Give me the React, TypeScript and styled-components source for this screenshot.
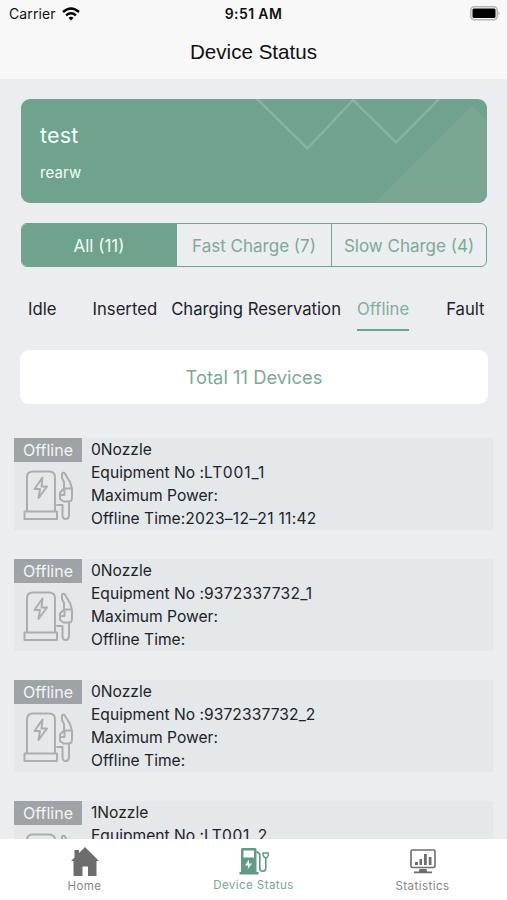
import React from 'react';
import styled, { createGlobalStyle } from 'styled-components';

const GREEN = '#6fa38d';

const GlobalStyle = createGlobalStyle`
  * { box-sizing: border-box; }
  body { margin: 0; background: #ecedf1; font-family: Inter, "Liberation Sans", sans-serif; overflow: hidden; }
`;

const Screen = styled.div`
  width: 507px;
  height: 900px;
  display: flex;
  flex-direction: column;
  overflow: hidden;
  background: #ecedf1;
  color: #202326;
`;

const Header = styled.header`
  height: 79px;
  flex: none;
  background: #f8f8f8;
  color: #111;
`;

const StatusBar = styled.div`
  height: 27px;
  display: grid;
  grid-template-columns: 1fr auto 1fr;
  align-items: center;
  padding: 0 6px 0 9px;
`;

const Carrier = styled.div`
  display: flex;
  align-items: center;
  gap: 6px;
  font-size: 14px;
  letter-spacing: 0.1px;
`;

const Clock = styled.div`
  font-size: 14px;
  font-weight: 600;
  letter-spacing: 0.4px;
  margin-right: 3px;
`;

const BatteryIcon = styled.svg`
  justify-self: end;
  display: block;
`;

const Title = styled.h1`
  margin: 0;
  text-align: center;
  font: 400 20.6px/50px "Liberation Sans", sans-serif;
`;

const Content = styled.main`
  flex: 1;
  min-height: 0;
  overflow: hidden;
  display: flex;
  flex-direction: column;
`;

const StationCard = styled.section`
  flex: none;
  display: grid;
  margin: 20px 20px 0 21px;
  height: 104px;
  border-radius: 9px;
  overflow: hidden;
  background: ${GREEN};
  color: #f2fbf5;
`;

const CardArt = styled.svg`
  grid-area: 1 / 1;
  display: block;
`;

const CardText = styled.div`
  grid-area: 1 / 1;
  padding: 21px 19px;
`;

const StationName = styled.div`
  font-size: 21.5px;
  line-height: 30px;
  letter-spacing: 0.2px;
`;

const StationNote = styled.div`
  margin-top: 12px;
  font-size: 15px;
  line-height: 22px;
  letter-spacing: 0.1px;
`;

const Segments = styled.div`
  flex: none;
  display: grid;
  grid-template-columns: 154px 155px 1fr;
  margin: 20px 20px 0 21px;
  height: 44px;
  border: 1px solid ${GREEN};
  border-radius: 6px;
  overflow: hidden;
`;

const Segment = styled.button<{ $active?: boolean }>`
  border: 0;
  border-left: ${p => (p.$active ? '0' : `1px solid ${GREEN}`)};
  padding: 2px 0 0;
  background: ${p => (p.$active ? GREEN : 'transparent')};
  color: ${p => (p.$active ? '#f2fbf5' : '#7caa97')};
  font: 400 17px/40px Inter, sans-serif;
`;

const Filters = styled.nav`
  flex: none;
  display: flex;
  margin: 28px 22px 0 28px;
  height: 36px;
`;

const Filter = styled.div<{ $active?: boolean; $gap?: number }>`
  height: 36px;
  margin-left: ${p => p.$gap ?? 0}px;
  border-bottom: 2px solid ${p => (p.$active ? GREEN : 'transparent')};
  color: ${p => (p.$active ? '#83ae9c' : '#202326')};
  font-size: 16.7px;
  line-height: 29px;
  white-space: nowrap;
`;

const Total = styled.div`
  flex: none;
  margin: 19px 19px 0 20px;
  height: 54px;
  border-radius: 9px;
  background: #fff;
  color: #7caa97;
  text-align: center;
  font-size: 18.4px;
  line-height: 55px;
`;

const DeviceList = styled.div`
  margin: 34px 14px 0;
  display: flex;
  flex-direction: column;
  gap: 29px;
`;

const DeviceRow = styled.article`
  flex: none;
  display: flex;
  height: 92px;
  gap: 9px;
  background: #e5e8eb;
`;

const DeviceSide = styled.div`
  width: 68px;
  display: flex;
  flex-direction: column;
`;

const Badge = styled.div`
  height: 24px;
  background: #9da3a6;
  color: #f3f5f6;
  text-align: center;
  font-size: 16px;
  line-height: 24px;
`;

const DeviceInfo = styled.div`
  font-size: 15.6px;
  line-height: 23px;
  white-space: nowrap;
`;

const Value = styled.span<{ $tracking?: number }>`
  letter-spacing: ${p => p.$tracking ?? 0}px;
`;

const TabBar = styled.footer`
  flex: none;
  height: 61px;
  display: grid;
  grid-template-columns: repeat(3, 1fr);
  background: #fff;
`;

const Tab = styled.div<{ $active?: boolean }>`
  display: flex;
  flex-direction: column;
  align-items: center;
  padding-top: 7px;
  color: ${p => (p.$active ? '#5f9c83' : '#6d6d6d')};
`;

const TabLabel = styled.span<{ $active?: boolean }>`
  margin-top: ${p => (p.$active ? 0 : 1)}px;
  color: ${p => (p.$active ? '#77a995' : '#858585')};
  font-size: 11.5px;
  line-height: 16px;
  letter-spacing: 0.45px;
`;

const ChargerIcon = () => (
  <svg width="67" height="68" viewBox="0 0 67 68" fill="none" stroke="#aaaeb0" strokeWidth="2" strokeLinejoin="round" strokeLinecap="round">
    <path d="M13 49V15Q13 9.500 19 9.500H35Q41 9.500 41 15V49M10.500 49.500H43V57H10.500ZM28.500 15.500 20.500 27H26L24.500 36 33 24.500H27.500Z" />
    <path d="M43 43H48.500V53Q48.500 57 51.500 57Q55 57 55 53V40M50 26V20L48 16V12Q48.500 10 50.500 11L56 20 58 27V35Q58 39.500 55 39.500H49.500L46 37V30.500L50 26.500H57M46.500 33H50.500V27" />
  </svg>
);

const HomeIcon = () => (
  <svg width="30" height="31" viewBox="0 0 30 31" fill="currentColor">
    <path d="M15 1 29 15H26.500V30H18V20.500H12.500V30H3.500V15H1L4.500 11.500V4H9V7Z" />
  </svg>
);

const PumpIcon = () => (
  <svg width="32" height="31" viewBox="0 0 32 31" fill="none">
    <path fill="currentColor" fillRule="evenodd" d="M3 3.500Q3 2 4.500 2H17Q18.500 2 18.500 3.500V26H20.500V28.500H1.500V26H3ZM5.500 4.500V11.500H16V4.500ZM11 13.500 7 19.500H10.500L9.500 23.500 14 17.500H11Z" />
    <path stroke="currentColor" strokeWidth="1.600" d="M18.500 5.500 21.800 8V22Q21.800 25.200 24.800 25.200Q27.800 25.200 27.800 22V11.500" />
    <path stroke="currentColor" strokeWidth="1.400" d="M24.200 7H31M25.200 7V9.500L26.500 11.500H29L30.200 9.500V7" />
  </svg>
);

const StatisticsIcon = () => (
  <svg width="28" height="31" viewBox="0 0 28 31" fill="none">
    <rect x="2" y="4" width="24" height="17.500" rx="1.500" stroke="currentColor" strokeWidth="1.600" />
    <path fill="currentColor" d="M6 16H9V19H6ZM10.500 13H13V19H10.500ZM15 8H17.800V19H15ZM19.800 11H22.500V19H19.800ZM10.500 23H17.500L18 25.500H23V27.200H5V25.500H10Z" />
  </svg>
);

const segments = ['All (11)', 'Fast Charge (7)', 'Slow Charge (4)'];
const devices = [
  { name: '0Nozzle', no: 'LT001_1', tracking: 0.95, time: '2023–12–21 11:42' },
  { name: '0Nozzle', no: '9372337732_1', tracking: 0.25, time: '' },
  { name: '0Nozzle', no: '9372337732_2', tracking: 0.1, time: '' },
  { name: '1Nozzle', no: 'LT001_2', tracking: 0.65, time: '' },
];

export default function App() {
  return (
    <Screen>
      <GlobalStyle />
      <Header>
        <StatusBar>
          <Carrier>
            Carrier
            <svg width="18" height="14" viewBox="0 0 18 14" fill="none" stroke="#000" strokeWidth="2.400">
              <path d="M1 5Q9-2 17 5M4 8.300Q9 4 14 8.300" />
              <path d="M6.500 10.800Q9 8.700 11.500 10.800L9 13.500Z" fill="#000" stroke="none" />
            </svg>
          </Carrier>
          <Clock>9:51 AM</Clock>
          <BatteryIcon width="31" height="15" viewBox="0 0 31 15">
            <rect x=".8" y=".8" width="26.400" height="13" rx="3.500" fill="#f8f8f8" stroke="#b5b5b5" strokeWidth="1.600" />
            <rect x="2.500" y="2.500" width="23" height="9.600" rx="1.500" />
            <path d="M28.500 5Q31 7.300 28.500 9.500Z" fill="#b5b5b5" />
          </BatteryIcon>
        </StatusBar>
        <Title>Device Status</Title>
      </Header>
      <Content>
        <StationCard>
          <CardArt width="466" height="104" viewBox="0 0 466 104" fill="none">
            <path d="M354 104 451 7 466 22V104Z" fill="#7aa691" />
            <path d="M235 -1 286.500 49.500 332 1 375 43.500 418 0" stroke="#83b59f" strokeWidth="2.500" />
          </CardArt>
          <CardText>
            <StationName>test</StationName>
            <StationNote>rearw</StationNote>
          </CardText>
        </StationCard>
        <Segments>
          {segments.map((label, i) => <Segment key={label} $active={i === 0}>{label}</Segment>)}
        </Segments>
        <Filters>
          <Filter>Idle</Filter>
          <Filter $gap={36}>Inserted</Filter>
          <Filter $gap={14}>Charging Reservation</Filter>
          <Filter $gap={16} $active>Offline</Filter>
          <Filter $gap={37}>Fault</Filter>
        </Filters>
        <Total>Total 11 Devices</Total>
        <DeviceList>
          {devices.map(d => (
            <DeviceRow key={d.no}>
              <DeviceSide>
                <Badge>Offline</Badge>
                <ChargerIcon />
              </DeviceSide>
              <DeviceInfo>
                <div>{d.name}</div>
                <div>Equipment No :<Value $tracking={d.tracking}>{d.no}</Value></div>
                <div>Maximum Power:</div>
                <div>Offline Time:<Value $tracking={0.28}>{d.time}</Value></div>
              </DeviceInfo>
            </DeviceRow>
          ))}
        </DeviceList>
      </Content>
      <TabBar>
        <Tab><HomeIcon /><TabLabel>Home</TabLabel></Tab>
        <Tab $active><PumpIcon /><TabLabel $active>Device Status</TabLabel></Tab>
        <Tab><StatisticsIcon /><TabLabel>Statistics</TabLabel></Tab>
      </TabBar>
    </Screen>
  );
}
